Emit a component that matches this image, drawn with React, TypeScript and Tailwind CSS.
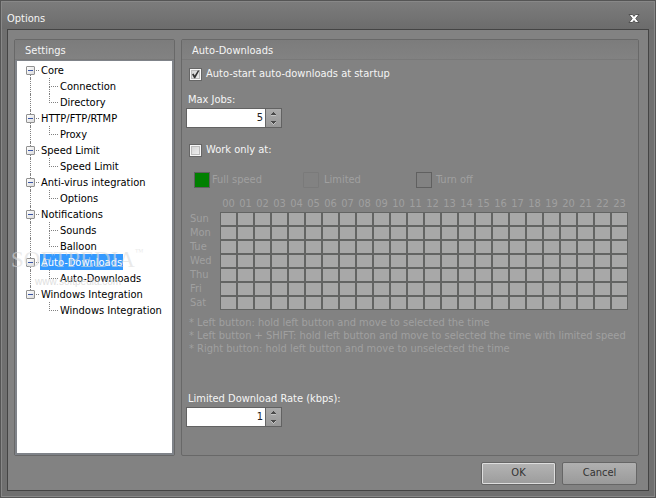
import { useState } from "react";

type Section = { label: string; children: string[] };

const sections: Section[] = [
  { label: "Core", children: ["Connection", "Directory"] },
  { label: "HTTP/FTP/RTMP", children: ["Proxy"] },
  { label: "Speed Limit", children: ["Speed Limit"] },
  { label: "Anti-virus integration", children: ["Options"] },
  { label: "Notifications", children: ["Sounds", "Balloon"] },
  { label: "Auto-Downloads", children: ["Auto-Downloads"] },
  { label: "Windows Integration", children: ["Windows Integration"] },
];

const days = ["Sun", "Mon", "Tue", "Wed", "Thu", "Fri", "Sat"];
const hours = Array.from({ length: 24 }, (_, h) => String(h).padStart(2, "0"));

function TreeLabel({ label, selected, onSelect }: { label: string; selected: boolean; onSelect: () => void }) {
  return (
    <button
      type="button"
      onClick={onSelect}
      className={
        selected
          ? "h-4 bg-[#3399ff] px-px leading-[18px] whitespace-nowrap text-white"
          : "h-4 px-px leading-[18px] whitespace-nowrap text-black"
      }
    >
      {label}
    </button>
  );
}

function Tree() {
  const [selected, setSelected] = useState("Auto-Downloads");
  return (
    <ul className="pt-px pl-[9px]">
      {sections.map((section, i) => {
        const last = i === sections.length - 1;
        return (
          <li key={section.label}>
            <div className="flex h-4 items-stretch">
              <span className="flex w-[9px] flex-col items-center">
                <span className={i === 0 ? "h-1" : "h-1 border-l border-dotted border-[#808080]"} />
                <span className="flex size-[9px] shrink-0 items-center justify-center rounded-[1px] border border-[#919191] bg-linear-to-br from-white to-[#dcdcdc]">
                  <span className="h-px w-[5px] bg-[#3a55a5]" />
                </span>
                <span className={last ? "h-[3px]" : "h-[3px] border-l border-dotted border-[#808080]"} />
              </span>
              <span className="mt-2 mr-px ml-px h-0 w-[3px] border-t border-dotted border-[#808080]" />
              <TreeLabel
                label={section.label}
                selected={selected === section.label}
                onSelect={() => setSelected(section.label)}
              />
            </div>
            <ul>
              {section.children.map((child, c) => (
                <li key={child} className="flex h-4 items-stretch">
                  <span className="flex w-[9px] justify-center">
                    {!last && <span className="h-4 border-l border-dotted border-[#808080]" />}
                  </span>
                  <span className="mr-px ml-[14px] flex w-[9px] flex-col">
                    <span className="h-[9px] border-b border-l border-dotted border-[#808080]" />
                    {c < section.children.length - 1 && (
                      <span className="h-[7px] border-l border-dotted border-[#808080]" />
                    )}
                  </span>
                  <TreeLabel
                    label={child}
                    selected={selected === section.label + "/" + child}
                    onSelect={() => setSelected(section.label + "/" + child)}
                  />
                </li>
              ))}
            </ul>
          </li>
        );
      })}
    </ul>
  );
}

function CheckBox({ label, initial }: { label: string; initial: boolean }) {
  const [checked, setChecked] = useState(initial);
  return (
    <label className="flex h-4 items-center gap-1 leading-4">
      <span className="grid size-[13px] shrink-0">
        <input
          type="checkbox"
          checked={checked}
          onChange={(e) => setChecked(e.target.checked)}
          className="col-start-1 row-start-1 size-[13px] appearance-none border border-[#666666] bg-linear-to-br from-[#cfcfcf] to-[#f4f4f4] shadow-[inset_0_0_0_1px_#f8f8f8,inset_0_0_0_2px_#bcbcbc]"
        />
        {checked && (
          <svg viewBox="0 0 13 13" className="pointer-events-none col-start-1 row-start-1 size-[13px]" aria-hidden="true">
            <path d="M3 6.2 L4.6 5.6 L5.7 7.5 L8.9 2.6 L10.4 2.6 L6.2 10.2 L5.1 10.2 Z" fill="#333333" />
          </svg>
        )}
      </span>
      {label}
    </label>
  );
}

function SpinBox({ id, label, initial }: { id: string; label: string; initial: number }) {
  const [value, setValue] = useState(initial);
  return (
    <div>
      <label htmlFor={id} className="block pl-0.5 leading-4">
        {label}
      </label>
      <div className="flex h-5 w-24 border border-[#626262]">
        <input
          id={id}
          type="text"
          inputMode="numeric"
          value={value}
          onChange={(e) => setValue(Number(e.target.value) || 0)}
          className="min-w-0 flex-1 bg-white pt-px pr-0.5 text-right text-[#222222] outline-none"
        />
        <div className="flex w-4 flex-col border-l border-[#666666] bg-linear-to-b from-[#acacac] to-[#989898]">
          <button
            type="button"
            aria-label={"Increase " + label}
            onClick={() => setValue(value + 1)}
            className="flex flex-1 items-center justify-center"
          >
            <svg viewBox="0 0 5 4" className="h-1 w-[5px]" shapeRendering="crispEdges" aria-hidden="true">
              <path d="M2 0h1v1h1v1h1v1H0V2h1V1h1z" fill="#4a4a4a" />
              <path d="M0 3h5v1H0z" fill="#c4c4c4" />
            </svg>
          </button>
          <button
            type="button"
            aria-label={"Decrease " + label}
            onClick={() => setValue(Math.max(0, value - 1))}
            className="flex flex-1 items-center justify-center"
          >
            <svg viewBox="0 0 5 4" className="h-1 w-[5px]" shapeRendering="crispEdges" aria-hidden="true">
              <path d="M0 1h5v1H4v1H3v1H2V3H1V2H0z" fill="#c4c4c4" />
              <path d="M0 0h5v1H4v1H3v1H2V2H1V1H0z" fill="#4a4a4a" />
            </svg>
          </button>
        </div>
      </div>
    </div>
  );
}

function Legend() {
  return (
    <ul className="mt-3.5 flex h-4 pl-2 text-[#a0a0a0]">
      <li className="flex w-[109px] items-center gap-0.5">
        <span className="size-4 border border-[#606060] bg-[#008000]" />
        <span className="leading-4">Full speed</span>
      </li>
      <li className="flex w-[113px] items-center gap-[5px]">
        <span className="size-4 rounded-[1px] border border-[#7a7a7a]" />
        <span className="leading-4">Limited</span>
      </li>
      <li className="flex items-center gap-1">
        <span className="size-4 border border-[#606060]" />
        <span className="leading-4">Turn off</span>
      </li>
    </ul>
  );
}

function Schedule() {
  return (
    <table className="mt-2 ml-1 w-[438px] table-fixed border-collapse text-[#a0a0a0]">
      <thead>
        <tr className="h-4">
          <td className="w-[30px]" />
          {hours.map((h) => (
            <th key={h} scope="col" className="w-[17px] p-0 text-center font-normal leading-4">
              {h}
            </th>
          ))}
        </tr>
      </thead>
      <tbody>
        {days.map((day) => (
          <tr key={day} className="h-[14px]">
            <th scope="row" className="p-0 text-left font-normal leading-[14px]">
              {day}
            </th>
            {hours.map((h) => (
              <td key={h} className="h-[14px] bg-[#a8a8a8] p-0 shadow-[inset_0_0_0_1px_#636463]" />
            ))}
          </tr>
        ))}
      </tbody>
    </table>
  );
}

function PanelHeader({ children }: { children: string }) {
  return (
    <h2 className="h-5 border-b border-[#797979] bg-linear-to-b from-[#7c7c7c] to-[#828282] pl-2.5 leading-[22px]">
      {children}
    </h2>
  );
}

function Watermark() {
  return (
    <div aria-hidden="true" className="pointer-events-none absolute top-[245px] left-2.5 text-[#dcdcdc]/60">
      <p className="flex h-7 items-start font-['Liberation_Serif',serif] text-[23px] leading-7">
        SOFTPEDIA
        <span className="text-[9px] leading-3">™</span>
      </p>
      <p className="pl-6 font-['Liberation_Sans',sans-serif] text-[10px] leading-4 text-[#d0d0d0]/70">www.softpedia.com</p>
    </div>
  );
}

export default function App() {
  return (
    <div className="relative flex min-h-screen w-full flex-col border border-[#555555] bg-[#6f6f6f] font-['DejaVu_Sans_Condensed','DejaVu_Sans',sans-serif] text-[11px] text-[#f5f5f5]">
      <div className="flex flex-1 flex-col border border-[#888888] px-[5px] pb-[5px]">
        <header className="-mx-[5px] flex h-[27px] items-center justify-between bg-linear-to-b from-[#7c7c7c] to-[#6c6c6c] pt-1.5 pr-[14px] pl-[5px]">
          <h1 className="leading-4">Options</h1>
          <button type="button" aria-label="Close" className="p-0">
            <svg viewBox="0 0 12 11" className="h-[11px] w-3" aria-hidden="true">
              <path d="M1 1.5h3.4L6 3.4 7.6 1.5H11L7.8 5.5 11 9.5H7.6L6 7.6 4.4 9.5H1l3.2-4z" fill="#ffffff" stroke="#404040" strokeWidth="0.8" />
            </svg>
          </button>
        </header>

        <div className="flex flex-1 flex-col border border-[#444444] bg-[#828282] pt-[9px] pr-[9px] pb-[5px] pl-1.5">
          <main className="flex flex-1 gap-1.5">
            <nav aria-label="Settings" className="flex w-[161px] shrink-0 flex-col rounded-[2px] border border-[#686868]">
              <PanelHeader>Settings</PanelHeader>
              <div className="flex flex-1 flex-col border-2 border-t border-[#7f8389] bg-white">
                <Tree />
              </div>
            </nav>

            <section className="flex min-w-0 flex-1 flex-col rounded-[2px] border border-[#686868]">
              <PanelHeader>Auto-Downloads</PanelHeader>
              <form className="flex flex-col items-start px-1" onSubmit={(e) => e.preventDefault()}>
                <div className="pt-1.5 pl-[3px]">
                  <CheckBox label="Auto-start auto-downloads at startup" initial={true} />
                </div>
                <div className="mt-2.5">
                  <SpinBox id="max-jobs" label="Max Jobs:" initial={5} />
                </div>
                <div className="mt-3.5 pl-[3px]">
                  <CheckBox label="Work only at:" initial={false} />
                </div>
                <Legend />
                <Schedule />
                <div className="mt-1.5 pl-[3px] leading-[13px] text-[#a0a0a0]">
                  <p>* Left button: hold left button and move to selected the time</p>
                  <p>* Left button + SHIFT: hold left button and move to selected the time with limited speed</p>
                  <p>* Right button: hold left button and move to unselected the time</p>
                </div>
                <div className="mt-9">
                  <SpinBox id="rate" label="Limited Download Rate (kbps):" initial={1} />
                </div>
              </form>
            </section>
          </main>

          <footer className="mt-1.5 flex justify-end gap-1.5 pr-0.5 text-[#333333]">
            <button
              type="button"
              className="h-[23px] w-[75px] rounded-[2px] border border-[#666666] bg-linear-to-b from-[#b4b4b4] to-[#9c9c9c] shadow-[inset_0_0_0_1px_#dedede]"
            >
              OK
            </button>
            <button
              type="button"
              className="h-[23px] w-[75px] rounded-[2px] border border-[#666666] bg-linear-to-b from-[#b0b0b0] to-[#9a9a9a]"
            >
              Cancel
            </button>
          </footer>
        </div>
      </div>
      <Watermark />
    </div>
  );
}
